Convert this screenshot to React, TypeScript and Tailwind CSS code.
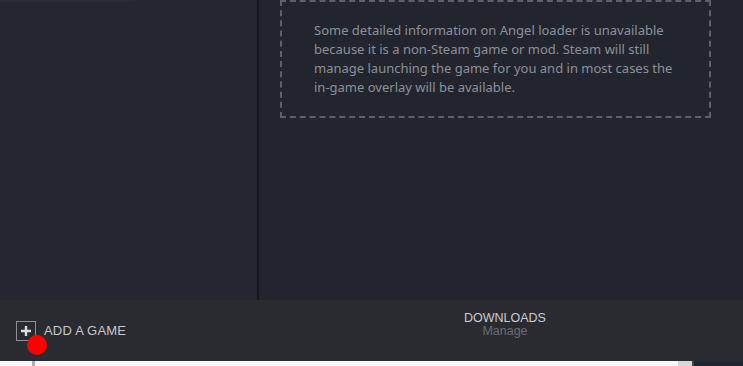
import React from "react";

export default function App() {
  return (
    <div className="w-[743px] h-[366px] overflow-hidden flex flex-col bg-[#23262d]">
      <div className="h-[300px] flex">
        <div className="w-[257px] h-full bg-[#24272f] relative">
          <div className="absolute left-0 top-0 w-[135px] h-[2px] bg-[#2a2d35]" />
        </div>
        <div className="w-[2px] h-full bg-[#15171c]" />
        <div className="flex-1 h-full bg-[#22252d] pl-[21px] pr-[32px]">
          <div className="h-[118px] border-2 border-dashed border-[#5c6067] pl-[32px] pt-[19px]">
            <p
              className="text-[13px] leading-[19px] text-[#8b9199] w-[364px]"
              style={{ fontFamily: '"Noto Sans", "Open Sans", sans-serif' }}
            >
              Some detailed information on Angel loader is unavailable because it is a non-Steam game or mod. Steam will still manage launching the game for you and in most cases the in-game overlay will be available.
            </p>
          </div>
        </div>
      </div>
      <div
        className="h-[61px] bg-[#2a2b31] flex items-center px-[16px] relative"
        style={{ fontFamily: '"Liberation Sans", Arial, sans-serif' }}
      >
        <div className="w-[448px] flex items-center gap-[8px]">
          <div className="w-[20px] h-[20px] border border-[#8d9096] flex items-center justify-center">
            <svg width="12" height="12" viewBox="0 0 12 12">
              <path d="M6 1v10M1 6h10" stroke="#dcdde0" strokeWidth="2.4" />
            </svg>
          </div>
          <span className="text-[13px] text-[#c5c7cb] tracking-[0.2px]">ADD A GAME</span>
        </div>
        <div className="flex flex-col items-center leading-[13px] -mt-[11px]">
          <span className="text-[12.5px] text-[#c9ccd1]">DOWNLOADS</span>
          <span className="text-[12.5px] text-[#686c73]">Manage</span>
        </div>
        <div className="absolute left-[27px] top-[35px] w-[20px] h-[20px] rounded-full bg-[#ff0000]" />
      </div>
      <div className="h-[5px] flex bg-[#f7f7f7]">
        <div className="w-[32px]" />
        <div className="w-[3px] bg-[#b0b0b0]" />
        <div className="w-[643px]" />
        <div className="w-[14px] bg-[#d6d6d6]" />
        <div className="w-[2px] bg-[#444]" />
        <div className="flex-1 bg-[#1e2530]" />
      </div>
    </div>
  );
}
